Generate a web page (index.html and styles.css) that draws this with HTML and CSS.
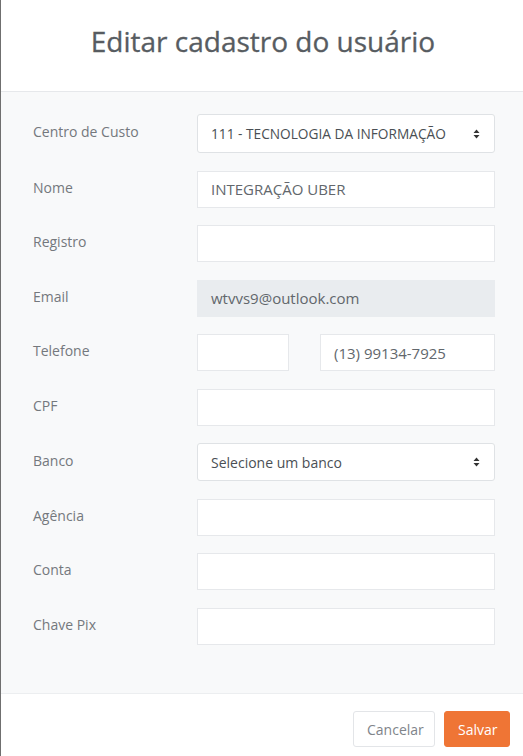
FILE: index.html
```html
<!DOCTYPE html>
<html lang="pt-BR">
<head>
<meta charset="utf-8">
<title>Editar cadastro do usuário</title>
<link rel="stylesheet" href="styles.css">
</head>
<body>
<div class="modal">
  <div class="modal-header">
    <h1 class="modal-title">Editar cadastro do usuário</h1>
  </div>
  <div class="modal-body">
    <div class="form-grid">
      <label class="label">Centro de Custo</label>
      <div class="control select">
        <span>111 - TECNOLOGIA DA INFORMAÇÃO</span>
        <svg class="caret" width="7" height="10" viewBox="0 0 7 10"><path d="M3.5 0.5 L6.5 4 L0.5 4 Z M0.5 6 L6.5 6 L3.5 9.5 Z" fill="#333"/></svg>
      </div>

      <label class="label">Nome</label>
      <div class="control input">INTEGRAÇÃO UBER</div>

      <label class="label">Registro</label>
      <div class="control input"></div>

      <label class="label">Email</label>
      <div class="control input disabled">wtvvs9@outlook.com</div>

      <label class="label">Telefone</label>
      <div class="phone">
        <div class="control input"></div>
        <div class="control input">(13) 99134-7925</div>
      </div>

      <label class="label">CPF</label>
      <div class="control input"></div>

      <label class="label">Banco</label>
      <div class="control select banco">
        <span>Selecione um banco</span>
        <svg class="caret" width="7" height="10" viewBox="0 0 7 10"><path d="M3.5 0.5 L6.5 4 L0.5 4 Z M0.5 6 L6.5 6 L3.5 9.5 Z" fill="#333"/></svg>
      </div>

      <label class="label">Agência</label>
      <div class="control input"></div>

      <label class="label">Conta</label>
      <div class="control input"></div>

      <label class="label">Chave Pix</label>
      <div class="control input"></div>
    </div>
  </div>
  <div class="modal-footer">
    <button class="btn btn-cancel">Cancelar</button>
    <button class="btn btn-save">Salvar</button>
  </div>
</div>
</body>
</html>
```

FILE: styles.css
```css
html, body {
  margin: 0;
  padding: 0;
  background: #6f6f6f;
  height: 100%;
  overflow: hidden;
}
body {
  font-family: "Open Sans", "Noto Sans", sans-serif;
}
.modal {
  margin-left: 1px;
  width: 522px;
  height: 756px;
  background: #fff;
  display: flex;
  flex-direction: column;
}
.modal-header {
  height: 91px;
  border-bottom: 1px solid #e6e8eb;
  display: flex;
  align-items: center;
  justify-content: center;
}
.modal-title {
  margin: -10px 0 0 0;
  font-size: 28px;
  font-weight: 400;
  color: #575c61;
  transform: translateX(1px);
  -webkit-text-stroke: 0.3px #575c61;
}
.modal-body {
  background: #f8f9fa;
  padding: 22px 28px 0 32px;
  height: 579px;
  border-bottom: 1px solid #eceef0;
}
.form-grid {
  display: grid;
  grid-template-columns: 164px 298px;
  row-gap: 17.5px;
  align-items: center;
}
.label {
  font-size: 14px;
  color: #74787d;
  margin-top: -4px;
}
.control {
  box-sizing: border-box;
  height: 37px;
  background: #fff;
  border: 1px solid #e6e8eb;
  font-size: 15px;
  color: #62676c;
  display: flex;
  align-items: center;
  padding: 0 13px;
}
.input.disabled {
  background: #e9ecef;
  border-color: #e9ecef;
  color: #62676c;
}
.select {
  height: 39px;
  border-radius: 3px;
  border-color: #dfe2e5;
  justify-content: space-between;
  font-size: 13.7px;
  color: #4a4f54;
  padding-right: 14px;
}
.select.banco {
  height: 38px;
  font-size: 14px;
}
.caret {
  display: block;
}
.phone {
  display: flex;
  gap: 31px;
}
.phone .control:first-child {
  width: 92px;
}
.phone .control:last-child {
  flex: 1;
}
.modal-footer {
  flex: 1;
  display: flex;
  justify-content: flex-end;
  align-items: flex-start;
  gap: 9px;
  padding: 17px 13px 0 0;
}
.btn {
  font-family: "Open Sans", "Noto Sans", sans-serif;
  font-size: 14px;
  height: 36px;
  border-radius: 3px;
  padding: 0 13px;
  cursor: pointer;
}
.btn-cancel {
  background: #fff;
  border: 1px solid #e3e5e8;
  color: #80848a;
  width: 82px;
}
.btn-save {
  background: #ef7535;
  border: 1px solid #ef7535;
  color: #fff;
  width: 66px;
}
```
